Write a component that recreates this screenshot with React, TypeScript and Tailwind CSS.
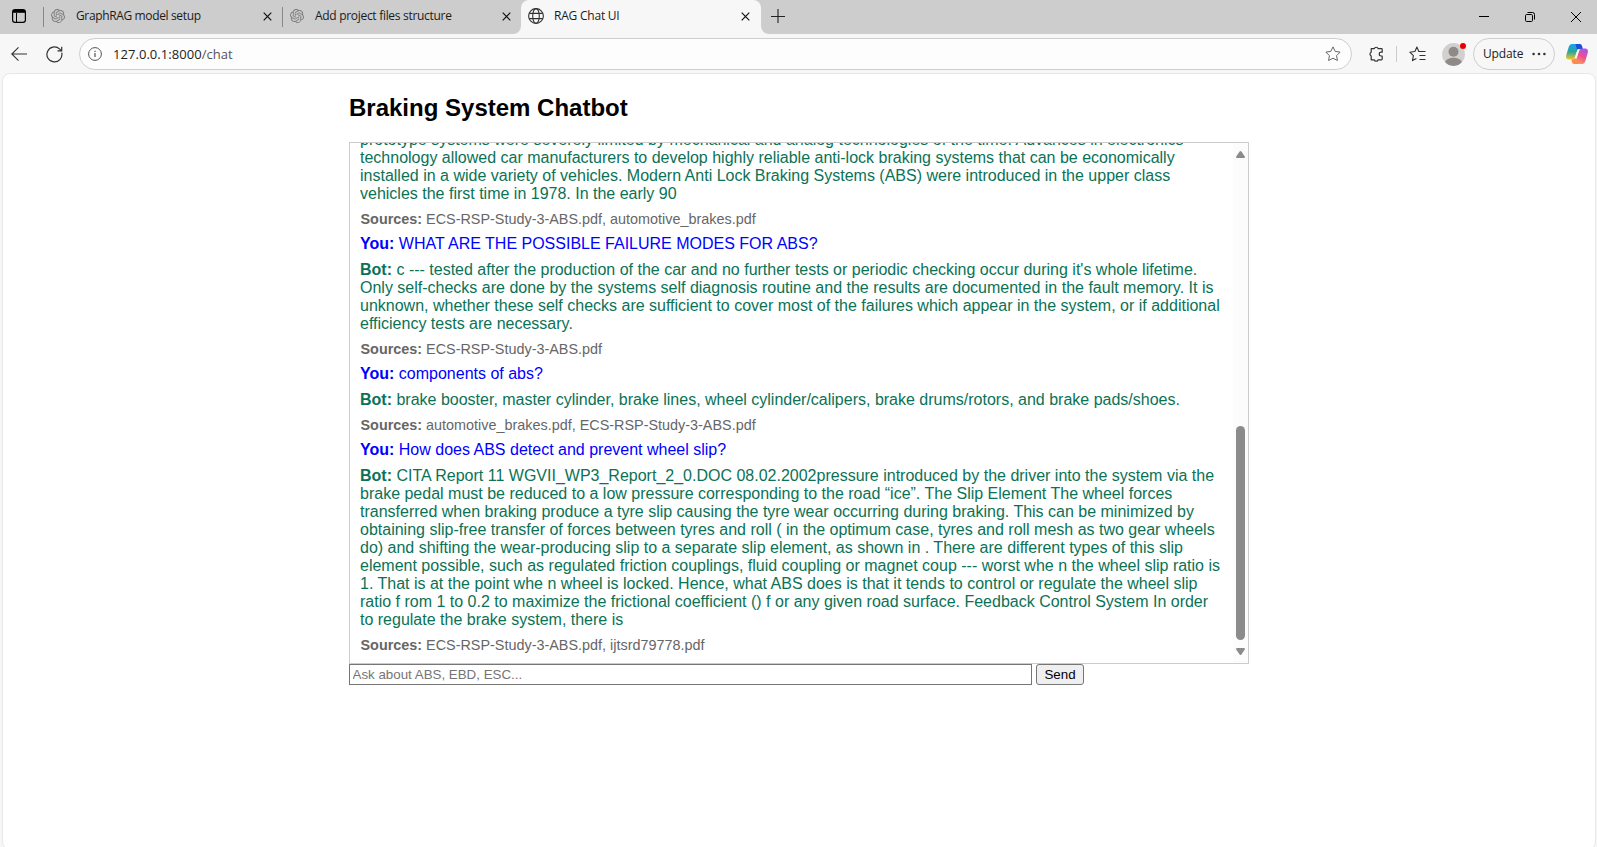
import React from "react";

const uiFont = "font-['Open_Sans','Noto_Sans',sans-serif]";

function OpenAIIcon() {
  return (
    <svg width="14" height="14" viewBox="0 0 24 24" fill="#7c7c7c" className="shrink-0">
      <path d="M22.28 9.82a5.98 5.98 0 0 0-.52-4.91 6.05 6.05 0 0 0-6.51-2.9A6.07 6.07 0 0 0 4.98 4.18a5.98 5.98 0 0 0-4 2.9 6.05 6.05 0 0 0 .74 7.1 5.98 5.98 0 0 0 .51 4.91 6.05 6.05 0 0 0 6.52 2.9A5.98 5.98 0 0 0 13.26 24a6.06 6.06 0 0 0 5.77-4.21 5.99 5.99 0 0 0 4-2.9 6.06 6.06 0 0 0-.75-7.07zm-9.02 12.61a4.48 4.48 0 0 1-2.88-1.04l.14-.08 4.78-2.76a.8.8 0 0 0 .39-.68v-6.74l2.02 1.17a.07.07 0 0 1 .04.05v5.58a4.5 4.5 0 0 1-4.49 4.5zM3.6 18.3a4.47 4.47 0 0 1-.54-3.01l.14.08 4.78 2.76a.77.77 0 0 0 .78 0l5.84-3.37v2.33a.08.08 0 0 1-.03.06L9.74 19.95A4.5 4.5 0 0 1 3.6 18.3zM2.34 7.9a4.49 4.49 0 0 1 2.37-1.98V11.6a.77.77 0 0 0 .39.68l5.81 3.35-2.02 1.17a.08.08 0 0 1-.07 0l-4.83-2.79A4.5 4.5 0 0 1 2.34 7.87zm16.6 3.86L13.1 8.36l2.02-1.16a.08.08 0 0 1 .07 0l4.83 2.79a4.49 4.49 0 0 1-.68 8.1v-5.68a.79.79 0 0 0-.4-.65zm2.01-3.02l-.14-.09-4.77-2.78a.78.78 0 0 0-.79 0L9.41 9.23V6.9a.07.07 0 0 1 .03-.06l4.83-2.79a4.5 4.5 0 0 1 6.68 4.66zM8.31 12.86l-2.02-1.16a.08.08 0 0 1-.04-.06V6.07a4.5 4.5 0 0 1 7.38-3.45l-.14.08-4.78 2.76a.8.8 0 0 0-.4.68zm1.1-2.36L12 9l2.61 1.5v3L12 15l-2.6-1.5z" />
    </svg>
  );
}

function CloseIcon() {
  return (
    <svg width="9" height="9" viewBox="0 0 9 9" stroke="#111" strokeWidth="1.2" className="shrink-0">
      <path d="M.7.7l7.6 7.6M8.3.7L.7 8.3" />
    </svg>
  );
}

function TabStrip() {
  return (
    <div className="flex h-[34px] items-stretch bg-[#cdcdcd]">
      <div className="flex w-[43px] items-center pb-[2px] pl-3">
        <svg width="14" height="14" viewBox="0 0 14 14" fill="none" stroke="#000">
          <rect x=".6" y=".6" width="12.8" height="12.8" rx="2.4" strokeWidth="1.2" />
          <path d="M1 2.4h12" strokeWidth="2.8" />
          <path d="M4.500 4v9.400" strokeWidth="1" />
        </svg>
      </div>
      <div className="flex w-[239px] items-center pb-[2px]">
        <div className="mt-[2px] h-5 w-px bg-[#888]" />
        <div className="ml-[7px]"><OpenAIIcon /></div>
        <span className="ml-[11px] w-[187px] whitespace-nowrap text-[12px] leading-4 tracking-[-0.36px] text-[#1b1b1b]">GraphRAG model setup</span>
        <CloseIcon />
      </div>
      <div className="flex w-[239px] items-center pb-[2px]">
        <div className="mt-[2px] h-5 w-px bg-[#888]" />
        <div className="ml-[7px]"><OpenAIIcon /></div>
        <span className="ml-[11px] w-[187px] whitespace-nowrap text-[12px] leading-4 tracking-[-0.3px] text-[#1b1b1b]">Add project files structure</span>
        <CloseIcon />
      </div>
      <div className="relative flex w-[240px] items-center rounded-t-[8px] bg-[#f7f7f7] pb-[2px] pl-[7px]">
        <svg width="8" height="8" className="absolute bottom-0 -left-2" fill="#f7f7f7"><path d="M8 0v8H0a8 8 0 0 0 8-8" /></svg>
        <svg width="8" height="8" className="absolute -right-2 bottom-0" fill="#f7f7f7"><path d="M0 0v8h8a8 8 0 0 1-8-8" /></svg>
        <svg width="16" height="16" viewBox="0 0 16 16" fill="none" stroke="#333" strokeWidth="1.1">
          <circle cx="8" cy="8" r="7.4" />
          <ellipse cx="8" cy="8" rx="3.3" ry="7.4" />
          <path d="M1.2 5.4h13.6M1.2 10.6h13.6" />
        </svg>
        <span className="ml-[10px] w-[187px] whitespace-nowrap text-[12px] leading-4 tracking-[-0.22px] text-[#1b1b1b]">RAG Chat UI</span>
        <CloseIcon />
      </div>
      <div className="flex flex-1 items-center pb-[3px] pl-[10px]">
        <svg width="14" height="14" viewBox="0 0 14 14" stroke="#222" strokeWidth="1.100"><path d="M7 0v14M0 7.500h14" /></svg>
      </div>
      <div className="flex items-center gap-9 pr-[16px]">
        <svg width="10" height="10" viewBox="0 0 10 10" stroke="#000"><path d="M0 4.500h10" /></svg>
        <svg width="10" height="10" viewBox="0 0 10 10" fill="none" stroke="#000">
          <rect x=".5" y="2.500" width="7" height="7" rx="1.2" />
          <path d="M2.500.5h5a2 2 0 0 1 2 2v5" />
        </svg>
        <svg width="10" height="10" viewBox="0 0 10 10" stroke="#000"><path d="M0 0l10 10M10 0L0 10" /></svg>
      </div>
    </div>
  );
}

const starPath = "M8 .9l2.200 4.500 4.900.7-3.500 3.500.8 4.900L8 12.200l-4.400 2.300.8-4.900L.9 6.100l4.900-.7z";

function Toolbar() {
  return (
    <div className="flex h-[39px] items-center bg-[#f7f7f7] pt-px">
      <svg width="16" height="14" viewBox="0 0 16 14" fill="none" stroke="#333" strokeWidth="1.1" className="ml-[11px] shrink-0">
        <path d="M16 7H.8M7.5.4L.8 7l6.700 6.600" />
      </svg>
      <svg width="17" height="17" viewBox="0 0 17 17" fill="none" stroke="#333" strokeWidth="1.2" className="ml-[19px] shrink-0">
        <path d="M15.700 6.600a7.500 7.500 0 1 1-2.200-3.700l1.900 1.900M15.700.8v4.100h-4.200" />
      </svg>
      <div className="ml-4 flex h-8 w-[1273px] items-center rounded-full border border-[#cecece] bg-[#fdfdfd] pl-2 pr-[10px]">
        <svg width="14" height="14" viewBox="0 0 14 14" fill="none" stroke="#555">
          <circle cx="7" cy="7" r="6.4" />
          <path d="M7 6v4M7 3.700v1.200" strokeWidth="1.2" />
        </svg>
        <span className="ml-[11px] flex-1 text-[13px] leading-5 tracking-[0.05px] text-[#222]">127.0.0.1:8000<span className="text-[#555]">/chat</span></span>
        <svg width="16" height="16" viewBox="0 0 16 16" fill="none" stroke="#666" strokeLinejoin="round"><path d={starPath} /></svg>
      </div>
      <svg width="16" height="16" viewBox="0 0 16 16" fill="none" stroke="#333" strokeWidth="1.2" strokeLinejoin="round" className="ml-4 shrink-0">
        <path d="M3.200 2.700h3a2.100 2.100 0 0 1 4 0h3.200q.8 0 .8.800v2.700h-1.100a1.900 1.900 0 0 0 0 3.800h1.100v3q0 .8-.8.800h-3.200a2.100 2.100 0 0 1-4 0h-3V10a2.100 2.100 0 0 1 0-3.800z" />
      </svg>
      <div className="ml-[12px] h-4 w-px bg-[#ccc]" />
      <svg width="17" height="16" viewBox="0 0 17 16" fill="none" stroke="#333" strokeWidth="1.1" strokeLinejoin="round" className="ml-3 shrink-0">
        <path d="M10.300 5.500H9.800L7.900 1 5.900 5.500.8 6.200l3.600 3.500-.9 4.900 3.900-2.100M10 5.500h6.500M10.500 9.500h6M10.500 13.500h6" />
      </svg>
      <div className="relative ml-4 h-[23px] w-[23px]">
        <svg width="23" height="23" viewBox="0 0 23 23">
          <circle cx="11.500" cy="11.500" r="11.400" fill="#d2d0ce" />
          <circle cx="11.500" cy="8.800" r="5" fill="#8d8a87" />
          <path d="M3.200 19.300c1.300-6 15.300-6 16.600 0a11.400 11.400 0 0 1-16.600 0" fill="#8d8a87" />
        </svg>
        <div className="absolute top-0 -right-px h-[6px] w-[6px] rounded-full bg-[#e80000]" />
      </div>
      <div className="ml-[8px] flex h-8 w-[82px] items-center rounded-full border border-[#cecece] pl-[9px] text-[12px] tracking-[-0.15px] text-[#222]">
        <span className="w-[49px]">Update</span>
        <svg width="14" height="4" viewBox="0 0 14 4" fill="#333"><circle cx="1.600" cy="2" r="1.300" /><circle cx="7" cy="2" r="1.300" /><circle cx="12.400" cy="2" r="1.300" /></svg>
      </div>
      <svg width="22" height="20" viewBox="0 0 22 20" className="ml-[11px] shrink-0">
        <defs>
          <linearGradient id="blue" x1="0" y1="0" x2="0" y2="1"><stop offset="0" stopColor="#19a3ea" /><stop offset=".5" stopColor="#2ba59b" /><stop offset="1" stopColor="#f8c91b" /></linearGradient>
          <linearGradient id="pink" x1=".8" y1="0" x2=".3" y2="1"><stop offset="0" stopColor="#a355f2" /><stop offset=".5" stopColor="#ee4f8e" /><stop offset="1" stopColor="#ff9d55" /></linearGradient>
        </defs>
        <path d="M6 0h7.500L9.200 12.800c-.6 1.800-1.600 2.700-3.200 2.700H2.800c-2.300 0-3.300-1.800-2.500-4.500L2.700 3C3.400 1 4.400 0 6 0z" fill="url(#blue)" />
        <path d="M9.500 0h4.300c1.300 0 1.900.8 2.300 2.200l.8 2.800h-3.300c-1.200 0-1.900.4-2.400 1.500L9.500 0z" fill="#1a4fd6" />
        <path d="M16 20H8.500l4.300-12.800c.6-1.800 1.600-2.700 3.200-2.700h3.200c2.300 0 3.300 1.800 2.500 4.500l-2.400 8c-.7 2-1.700 3-3.300 3z" fill="url(#pink)" />
        <path d="M12.500 20H8.200c-1.300 0-1.900-.8-2.300-2.200L5.200 15.400c3 .2 4-1 5-3.400l.8 3z" fill="#ff8a4c" />
        <path d="M12.600 5.500L9.500 14.500" stroke="#f7f7f7" strokeWidth="2" />
      </svg>
    </div>
  );
}

type Message = { who: "You" | "Bot" | "Sources"; lines: string[]; continued?: boolean };

const messages: Message[] = [
  {
    who: "Bot",
    continued: true,
    lines: [
      "prototype systems were severely limited by mechanical and analog technologies of the time. Advances in electronics",
      "technology allowed car manufacturers to develop highly reliable anti-lock braking systems that can be economically",
      "installed in a wide variety of vehicles. Modern Anti Lock Braking Systems (ABS) were introduced in the upper class",
      "vehicles the first time in 1978. In the early 90",
    ],
  },
  { who: "Sources", lines: ["ECS-RSP-Study-3-ABS.pdf, automotive_brakes.pdf"] },
  { who: "You", lines: ["WHAT ARE THE POSSIBLE FAILURE MODES FOR ABS?"] },
  {
    who: "Bot",
    lines: [
      "c --- tested after the production of the car and no further tests or periodic checking occur during it's whole lifetime.",
      "Only self-checks are done by the systems self diagnosis routine and the results are documented in the fault memory. It is",
      "unknown, whether these self checks are sufficient to cover most of the failures which appear in the system, or if additional",
      "efficiency tests are necessary.",
    ],
  },
  { who: "Sources", lines: ["ECS-RSP-Study-3-ABS.pdf"] },
  { who: "You", lines: ["components of abs?"] },
  { who: "Bot", lines: ["brake booster, master cylinder, brake lines, wheel cylinder/calipers, brake drums/rotors, and brake pads/shoes."] },
  { who: "Sources", lines: ["automotive_brakes.pdf, ECS-RSP-Study-3-ABS.pdf"] },
  { who: "You", lines: ["How does ABS detect and prevent wheel slip?"] },
  {
    who: "Bot",
    lines: [
      "CITA Report 11 WGVII_WP3_Report_2_0.DOC 08.02.2002pressure introduced by the driver into the system via the",
      "brake pedal must be reduced to a low pressure corresponding to the road “ice”. The Slip Element The wheel forces",
      "transferred when braking produce a tyre slip causing the tyre wear occurring during braking. This can be minimized by",
      "obtaining slip-free transfer of forces between tyres and roll ( in the optimum case, tyres and roll mesh as two gear wheels",
      "do) and shifting the wear-producing slip to a separate slip element, as shown in . There are different types of this slip",
      "element possible, such as regulated friction couplings, fluid coupling or magnet coup --- worst whe n the wheel slip ratio is",
      "1. That is at the point whe n wheel is locked. Hence, what ABS does is that it tends to control or regulate the wheel slip",
      "ratio f rom 1 to 0.2 to maximize the frictional coefficient () f or any given road surface. Feedback Control System In order",
      "to regulate the brake system, there is",
    ],
  },
  { who: "Sources", lines: ["ECS-RSP-Study-3-ABS.pdf, ijtsrd79778.pdf"] },
];

const styles = {
  You: "text-[16px] leading-[18px] text-[#0000ff]",
  Bot: "text-[16px] leading-[18px] text-[#0b7256]",
  Sources: "pl-[0.5px] text-[14.4px] leading-4 text-[#666]",
};

function ChatLog() {
  return (
    <div className="flex h-[522px] border border-[#ccc]">
      <div className="flex min-w-0 flex-1 flex-col justify-end gap-2 overflow-hidden pb-[10px] pl-[10px]">
        {messages.map((m, i) => (
          <div key={i} className={`shrink-0 whitespace-nowrap ${styles[m.who]}`}>
            {m.lines.map((line, j) => (
              <div key={j}>
                {j === 0 && !m.continued && <><b>{m.who}:</b>{" "}</>}
                {line}
              </div>
            ))}
          </div>
        ))}
      </div>
      <div className="flex w-[15px] flex-col items-center bg-[#fcfcfc] pt-2 pb-2">
        <svg width="9" height="7" viewBox="0 0 9 7" fill="#8b8b8b"><path d="M3.600.5q.9-1 1.800 0L8.800 5.500Q9.200 7 8 7H1Q-.2 7 .2 5.500z" /></svg>
        <div className="mt-auto mb-2 h-[214px] w-[9px] rounded-full bg-[#8b8b8b]" />
        <svg width="9" height="7" viewBox="0 0 9 7" fill="#8b8b8b"><path d="M3.600 6.500q.9 1 1.800 0L8.800 1.500Q9.200 0 8 0H1Q-.2 0 .2 1.500z" /></svg>
      </div>
    </div>
  );
}

export default function App() {
  return (
    <div className={`flex h-[847px] w-[1597px] flex-col overflow-hidden bg-[#f7f7f7] ${uiFont}`}>
      <TabStrip />
      <Toolbar />
      <div className="mr-px -mb-[3px] ml-[2px] flex-1 rounded-[8px] border border-[#e8e8e8] bg-white font-['Liberation_Sans',Arial,sans-serif]">
        <main className="ml-[346px] w-[900px] pt-5">
          <h2 className="mb-5 text-[24px] leading-7 font-bold text-black">Braking System Chatbot</h2>
          <ChatLog />
          <div className="flex gap-1">
            <input
              placeholder="Ask about ABS, EBD, ESC..."
              className="h-[21px] w-[683px] border border-[#767676] bg-white px-[2.5px] text-[13.333px] placeholder:text-[#757575]"
            />
            <button className="h-[21px] w-12 rounded-[3px] border border-[#767676] bg-[#efefef] text-[13.333px] leading-[18px] text-black">Send</button>
          </div>
        </main>
      </div>
    </div>
  );
}
